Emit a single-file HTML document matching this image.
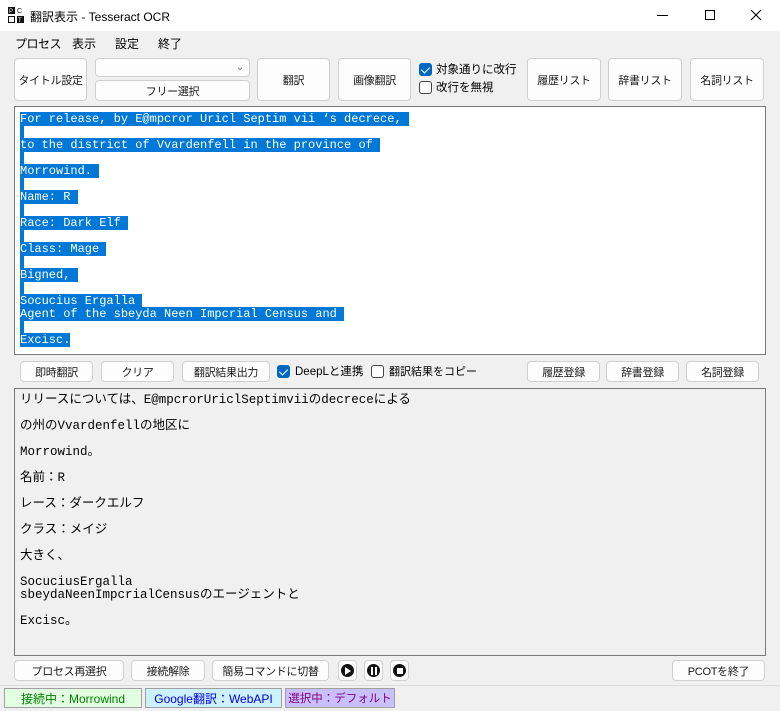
<!DOCTYPE html>
<html><head><meta charset="utf-8"><style>
*{margin:0;padding:0;box-sizing:border-box}
body{width:780px;height:711px;overflow:hidden;background:#f0f0f0;font-family:"Liberation Sans","Noto Sans CJK JP",sans-serif;font-size:12px;color:#000;position:relative}
.a{position:absolute}
.title{left:0;top:0;width:780px;height:31px;background:#fff}
.btn{position:absolute;background:#fdfdfd;border:1px solid #d0d0d0;border-radius:4px;display:flex;align-items:center;justify-content:center;font-size:11px;color:#1a1a1a;white-space:nowrap;letter-spacing:-0.3px}
.cb{position:absolute;width:13px;height:13px;border:1px solid #444;border-radius:3px;background:#fff}
.cb.on{background:#0067c0;border-color:#0067c0}
.cb.on:after{content:"";position:absolute;left:3px;top:1px;width:4px;height:7px;border:solid #fff;border-width:0 1.5px 1.5px 0;transform:rotate(45deg)}
.lbl{position:absolute;font-size:12px;white-space:nowrap}
.box{position:absolute;border:1px solid #7a7a7a}
.mono{font-family:"Liberation Mono","Noto Sans CJK JP",monospace;font-size:12px;line-height:13px;white-space:pre}
.sel span{background:#0078d7;color:#fff}
.sel b{display:inline-block;width:4px;height:13px;background:#0078d7;vertical-align:top}
.st{position:absolute;top:688px;height:20px;border:1px solid #a0a0a0;display:flex;align-items:center;justify-content:center;font-size:12px;white-space:nowrap}
.ic{position:absolute;top:660px;width:19px;height:21px;background:#fdfdfd;border:1px solid #d0d0d0;border-radius:4px}
.ic i{position:absolute;left:2px;top:3px;width:13px;height:13px;border-radius:50%;background:#111}
</style></head><body>
<div class="a title"></div>
<svg class="a" style="left:8px;top:7px" width="16" height="16"><rect x="0" y="0" width="7" height="7" fill="#111"/><rect x="9" y="9" width="7" height="7" fill="#111"/><text x="1" y="6" font-size="6" fill="#fff" font-family="Liberation Sans">P</text><text x="9" y="6" font-size="7" fill="#111" font-family="Liberation Sans">C</text><rect x="0.5" y="9.5" width="6" height="6" fill="none" stroke="#111"/><text x="10" y="15" font-size="6" fill="#fff" font-family="Liberation Sans">T</text></svg>
<div class="lbl" style="left:30px;top:8px;font-size:12px">翻訳表示 - Tesseract OCR</div>
<div class="a" style="left:657px;top:15px;width:11px;height:1px;background:#000"></div>
<div class="a" style="left:705px;top:10px;width:10px;height:10px;border:1px solid #000"></div>
<svg class="a" style="left:750px;top:9px" width="12" height="12"><path d="M1 1L11 11M11 1L1 11" stroke="#000" stroke-width="1.1"/></svg>
<div class="lbl" style="left:15px;top:35px;letter-spacing:-0.5px">プロセス</div>
<div class="lbl" style="left:72px;top:35px">表示</div>
<div class="lbl" style="left:115px;top:35px">設定</div>
<div class="lbl" style="left:158px;top:35px">終了</div>

<div class="btn" style="left:14px;top:58px;width:73px;height:43px">タイトル設定</div>
<div class="btn" style="left:95px;top:58px;width:155px;height:19px;justify-content:flex-end;padding-right:5px;color:#666;font-size:10px">&#8964;</div>
<div class="btn" style="left:95px;top:80px;width:155px;height:21px">フリー選択</div>
<div class="btn" style="left:257px;top:58px;width:73px;height:43px">翻訳</div>
<div class="btn" style="left:338px;top:58px;width:73px;height:43px">画像翻訳</div>
<div class="cb on" style="left:419px;top:63px"></div><div class="lbl" style="left:436px;top:61px;font-size:11.5px">対象通りに改行</div>
<div class="cb" style="left:419px;top:81px"></div><div class="lbl" style="left:436px;top:79px;font-size:11.5px">改行を無視</div>
<div class="btn" style="left:527px;top:58px;width:74px;height:43px">履歴リスト</div>
<div class="btn" style="left:608px;top:58px;width:74px;height:43px">辞書リスト</div>
<div class="btn" style="left:690px;top:58px;width:74px;height:43px">名詞リスト</div>

<div class="box" style="left:14px;top:106px;width:752px;height:249px;background:#fff"></div>
<div class="a mono sel" style="left:20px;top:113px"><span>For release, by E@mpcror Uricl Septim vii ‘s decrece, </span>
<b></b>
<span>to the district of Vvardenfell in the province of </span>
<b></b>
<span>Morrowind. </span>
<b></b>
<span>Name: R </span>
<b></b>
<span>Race: Dark Elf </span>
<b></b>
<span>Class: Mage </span>
<b></b>
<span>Bigned, </span>
<b></b>
<span>Socucius Ergalla </span>
<span>Agent of the sbeyda Neen Impcrial Census and </span>
<b></b>
<span>Excisc.</span></div>

<div class="btn" style="left:20px;top:361px;width:73px;height:21px">即時翻訳</div>
<div class="btn" style="left:101px;top:361px;width:73px;height:21px">クリア</div>
<div class="btn" style="left:182px;top:361px;width:88px;height:21px">翻訳結果出力</div>
<div class="cb on" style="left:277px;top:365px"></div><div class="lbl" style="left:295px;top:363px;font-size:11.5px">DeepLと連携</div>
<div class="cb" style="left:371px;top:365px"></div><div class="lbl" style="left:389px;top:363px;font-size:11px">翻訳結果をコピー</div>
<div class="btn" style="left:527px;top:361px;width:73px;height:21px">履歴登録</div>
<div class="btn" style="left:606px;top:361px;width:73px;height:21px">辞書登録</div>
<div class="btn" style="left:686px;top:361px;width:73px;height:21px">名詞登録</div>

<div class="box" style="left:14px;top:388px;width:752px;height:268px;background:#f0f0f0"></div>
<div class="a mono" style="left:20px;top:394px;font-size:12.5px">リリースについては、E@mpcrorUriclSeptimviiのdecreceによる

の州のVvardenfellの地区に

Morrowind。

名前：R

レース：ダークエルフ

クラス：メイジ

大きく、

SocuciusErgalla
sbeydaNeenImpcrialCensusのエージェントと

Excisc。</div>

<div class="btn" style="left:14px;top:660px;width:110px;height:21px">プロセス再選択</div>
<div class="btn" style="left:131px;top:660px;width:74px;height:21px">接続解除</div>
<div class="btn" style="left:212px;top:660px;width:117px;height:21px">簡易コマンドに切替</div>
<div class="ic" style="left:338px"><i></i><svg class="a" style="left:6px;top:6px" width="7" height="8"><path d="M0 0L6 4L0 8Z" fill="#fff"/></svg></div>
<div class="ic" style="left:364px"><i></i><svg class="a" style="left:6px;top:6px" width="7" height="8"><rect x="0" y="0" width="2" height="8" fill="#fff"/><rect x="4" y="0" width="2" height="8" fill="#fff"/></svg></div>
<div class="ic" style="left:390px"><i></i><svg class="a" style="left:6px;top:6px" width="7" height="8"><rect x="0" y="1" width="6" height="6" fill="#fff"/></svg></div>
<div class="btn" style="left:672px;top:660px;width:93px;height:21px">PCOTを終了</div>

<div class="a" style="left:0;top:685px;width:780px;height:1px;background:#dcdcdc"></div>
<div class="st" style="left:4px;width:138px;background:#e2ffe2;color:#008000">接続中：Morrowind</div>
<div class="st" style="left:145px;width:137px;background:#ccf2ff;color:#0000e0">Google翻訳：WebAPI</div>
<div class="st" style="left:285px;width:110px;background:#c8c0ff;color:#800080;font-size:11.5px">選択中：デフォルト</div>
</body></html>
